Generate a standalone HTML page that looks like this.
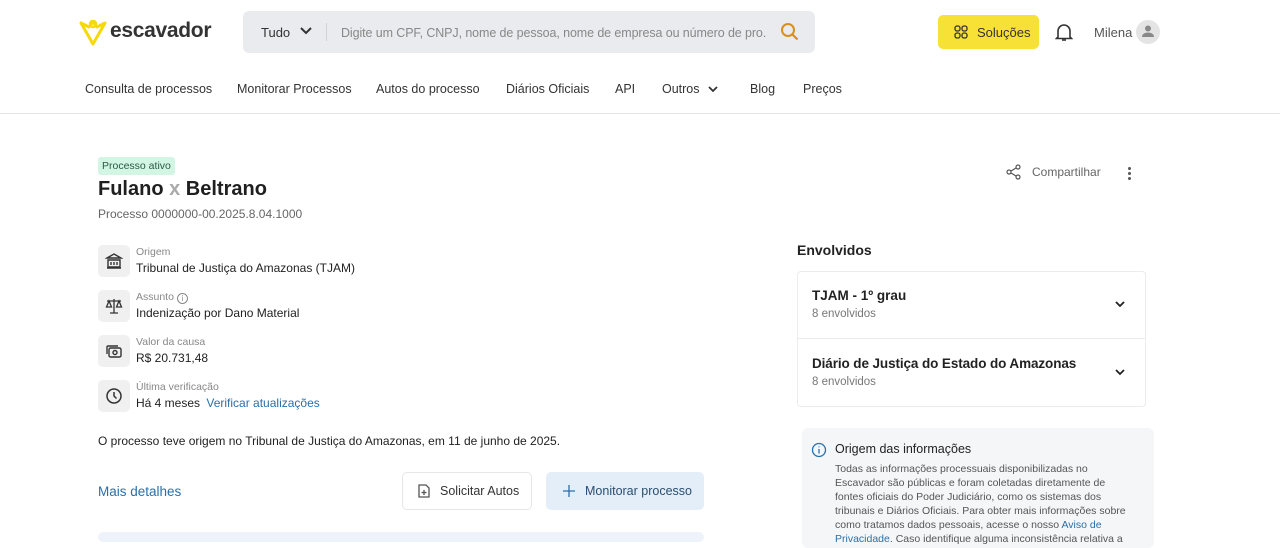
<!DOCTYPE html>
<html><head><meta charset="utf-8"><style>
*{box-sizing:border-box;margin:0;padding:0}
body{width:1280px;height:540px;overflow:hidden;background:#fff;font-family:"Liberation Sans",sans-serif;color:#222;position:relative}
.a{position:absolute;white-space:nowrap}
svg{display:block}
</style></head><body>
<svg class="a" style="left:78px;top:17px" width="30" height="30" viewBox="0 0 30 30"><path d="M3 6 L15 27 L27 6 L19 10 L15 5 L11 10 Z" fill="none" stroke="#f5d90a" stroke-width="3" stroke-linejoin="round"/><circle cx="15" cy="7" r="3" fill="none" stroke="#f5d90a" stroke-width="2.5"/></svg>
<div class="a" style="left:110px;top:19px;font-size:21px;font-weight:bold;color:#333;letter-spacing:-0.3px">escavador</div>
<div class="a" style="left:243px;top:11px;width:572px;height:42px;background:#e9ebee;border-radius:6px"></div>
<div class="a" style="left:261px;top:25px;font-size:13px;color:#333">Tudo</div>
<svg class="a" style="left:299px;top:26px" width="14" height="10" viewBox="0 0 14 10"><path d="M2 2l5 5 5-5" fill="none" stroke="#333" stroke-width="2"/></svg>
<div class="a" style="left:326px;top:23px;width:1px;height:18px;background:#d0d3d8"></div>
<div class="a" style="left:341px;top:26px;font-size:12.5px;color:#888;width:425px;overflow:hidden;letter-spacing:-0.1px">Digite um CPF, CNPJ, nome de pessoa, nome de empresa ou número de pro...</div>
<svg class="a" style="left:780px;top:22px" width="20" height="20" viewBox="0 0 20 20"><circle cx="8" cy="8" r="6" fill="none" stroke="#d9901a" stroke-width="2"/><path d="M12.5 12.5l5 5" stroke="#d9901a" stroke-width="2.2"/></svg>
<div class="a" style="left:938px;top:15px;width:101px;height:34px;background:#f8e137;border-radius:5px"></div>
<svg class="a" style="left:954px;top:25px" width="14" height="14" viewBox="0 0 14 14" fill="none" stroke="#333" stroke-width="1.3"><rect x="1" y="1" width="5" height="5" rx="2"/><rect x="8" y="1" width="5" height="5" rx="2"/><rect x="1" y="8" width="5" height="5" rx="2"/><rect x="8" y="8" width="5" height="5" rx="2"/></svg>
<div class="a" style="left:977px;top:25px;font-size:13px;color:#333">Soluções</div>
<svg class="a" style="left:1055px;top:22px" width="18" height="20" viewBox="0 0 18 20" fill="none" stroke="#333" stroke-width="1.6"><path d="M3 15V9a6 6 0 0112 0v6l1.5 1.5h-15z"/><path d="M7 18h4"/></svg>
<div class="a" style="left:1094px;top:25px;font-size:13px;color:#555">Milena</div>
<div class="a" style="left:1136px;top:20px;width:24px;height:24px;border-radius:50%;background:#e4e4e4"></div>
<svg class="a" style="left:1141px;top:24px" width="14" height="14" viewBox="0 0 14 14" fill="#888"><circle cx="7" cy="4.5" r="3"/><path d="M1 13c0-3 3-4.5 6-4.5s6 1.5 6 4.5z"/></svg>
<div class="a" style="top:82px;left:85px;font-size:12.5px;color:#333">Consulta de processos</div>
<div class="a" style="top:82px;left:237px;font-size:12.5px;color:#333">Monitorar Processos</div>
<div class="a" style="top:82px;left:376px;font-size:12.5px;color:#333">Autos do processo</div>
<div class="a" style="top:82px;left:506px;font-size:12.5px;color:#333">Diários Oficiais</div>
<div class="a" style="top:82px;left:615px;font-size:12.5px;color:#333">API</div>
<div class="a" style="top:82px;left:662px;font-size:12.5px;color:#333">Outros</div>
<svg class="a" style="left:707px;top:85px" width="12" height="9" viewBox="0 0 12 9"><path d="M2 2l4 4 4-4" fill="none" stroke="#333" stroke-width="1.8"/></svg>
<div class="a" style="top:82px;left:750px;font-size:12.5px;color:#333">Blog</div>
<div class="a" style="top:82px;left:803px;font-size:12.5px;color:#333">Preços</div>
<div class="a" style="left:0;top:113px;width:1280px;height:1px;background:#e5e5e5"></div>
<div class="a" style="left:98px;top:157px;height:18px;padding:0 4px;background:#d2f5e4;border-radius:3px;font-size:10.5px;line-height:18px;color:#2a5a45">Processo ativo</div>
<div class="a" style="left:98px;top:178px;font-size:20px;font-weight:bold;color:#1f1f1f">Fulano <span style="color:#aaa">x</span> Beltrano</div>
<div class="a" style="left:98px;top:207px;font-size:12px;color:#666">Processo 0000000-00.2025.8.04.1000</div>
<svg class="a" style="left:1006px;top:164px" width="16" height="16" viewBox="0 0 16 16" fill="none" stroke="#555" stroke-width="1.2"><circle cx="3" cy="8" r="2"/><circle cx="12" cy="3" r="2"/><circle cx="12" cy="13" r="2"/><path d="M5 7l5-3M5 9l5 3"/></svg>
<div class="a" style="left:1032px;top:165px;font-size:12px;color:#666">Compartilhar</div>
<div class="a" style="left:1128px;top:167px;width:3px;height:3px;background:#555;border-radius:50%;box-shadow:0 5px 0 #555,0 10px 0 #555"></div>
<div class="a" style="left:98px;top:245px;width:32px;height:32px;background:#f0f0f0;border-radius:5px"></div>
<svg class="a" style="left:105px;top:252px" width="18" height="18" viewBox="0 0 18 18" fill="none" stroke="#333" stroke-width="1.4"><path d="M2 6l7-4 7 4z"/><path d="M3 8h12v7H3zM6 10v3M9 10v3M12 10v3M2 16h14"/></svg>
<div class="a" style="left:136px;top:246px;font-size:10.5px;color:#888">Origem</div>
<div class="a" style="left:136px;top:261px;font-size:12px;color:#222">Tribunal de Justiça do Amazonas (TJAM)</div>
<div class="a" style="left:98px;top:290px;width:32px;height:32px;background:#f0f0f0;border-radius:5px"></div>
<svg class="a" style="left:105px;top:297px" width="18" height="18" viewBox="0 0 18 18" fill="none" stroke="#333" stroke-width="1.3"><path d="M9 2v14M5 16h8M2 4h14M4 4l-2.5 6h5zM14 4l-2.5 6h5z"/></svg>
<div class="a" style="left:136px;top:291px;font-size:10.5px;color:#888">Assunto <span style="display:inline-block;width:11px;height:11px;border:1px solid #888;border-radius:50%;font-size:8px;line-height:9px;text-align:center;vertical-align:-1px">i</span></div>
<div class="a" style="left:136px;top:306px;font-size:12px;color:#222">Indenização por Dano Material</div>
<div class="a" style="left:98px;top:335px;width:32px;height:32px;background:#f0f0f0;border-radius:5px"></div>
<svg class="a" style="left:105px;top:342px" width="18" height="18" viewBox="0 0 18 18" fill="none" stroke="#333" stroke-width="1.4"><rect x="4" y="6" width="12" height="9" rx="1.5"/><path d="M2 12V5a1 1 0 011-1h10"/><circle cx="10" cy="10.5" r="2"/></svg>
<div class="a" style="left:136px;top:336px;font-size:10.5px;color:#888">Valor da causa</div>
<div class="a" style="left:136px;top:351px;font-size:12px;color:#222">R$ 20.731,48</div>
<div class="a" style="left:98px;top:380px;width:32px;height:32px;background:#f0f0f0;border-radius:5px"></div>
<svg class="a" style="left:105px;top:387px" width="18" height="18" viewBox="0 0 18 18" fill="none" stroke="#333" stroke-width="1.5"><circle cx="9" cy="9" r="7"/><path d="M9 5v4l2.5 2.5"/></svg>
<div class="a" style="left:136px;top:381px;font-size:10.5px;color:#888">Última verificação</div>
<div class="a" style="left:136px;top:396px;font-size:12px;color:#222">Há 4 meses <span style="color:#2a6fa8;margin-left:3px">Verificar atualizações</span></div>
<div class="a" style="left:98px;top:434px;font-size:12px;color:#222">O processo teve origem no Tribunal de Justiça do Amazonas, em 11 de junho de 2025.</div>
<div class="a" style="left:98px;top:484px;font-size:13.5px;color:#2a6fa8">Mais detalhes</div>
<div class="a" style="left:402px;top:472px;width:130px;height:38px;border:1px solid #e6e6e6;border-radius:5px;background:#fff"></div>
<svg class="a" style="left:417px;top:483px" width="14" height="16" viewBox="0 0 14 16" fill="none" stroke="#555" stroke-width="1.3"><path d="M2 2h7l3 3v9H2z"/><path d="M7 7v5M4.5 9.5h5"/></svg>
<div class="a" style="left:440px;top:484px;font-size:12.5px;color:#333">Solicitar Autos</div>
<div class="a" style="left:546px;top:472px;width:158px;height:38px;border-radius:5px;background:#e3eef8"></div>
<svg class="a" style="left:562px;top:484px" width="14" height="14" viewBox="0 0 14 14" stroke="#2a6fa8" stroke-width="1.3"><path d="M7 1v12M1 7h12"/></svg>
<div class="a" style="left:585px;top:484px;font-size:12.5px;color:#2a4f70">Monitorar processo</div>
<div class="a" style="left:98px;top:532px;width:606px;height:10px;background:#eef2fa;border-radius:5px"></div>
<div class="a" style="left:797px;top:242px;font-size:14px;font-weight:bold;color:#222">Envolvidos</div>
<div class="a" style="left:797px;top:271px;width:349px;height:136px;border:1px solid #ececec;border-radius:4px"></div>
<div class="a" style="left:798px;top:338px;width:347px;height:1px;background:#ececec"></div>
<div class="a" style="left:812px;top:288px;font-size:13.5px;font-weight:bold;color:#222">TJAM - 1º grau</div>
<div class="a" style="left:812px;top:308px;font-size:11.5px;color:#777">8 envolvidos</div>
<div class="a" style="left:812px;top:356px;font-size:13.5px;font-weight:bold;color:#222;letter-spacing:-0.1px">Diário de Justiça do Estado do Amazonas</div>
<div class="a" style="left:812px;top:376px;font-size:11.5px;color:#777">8 envolvidos</div>
<svg class="a" style="left:1114px;top:300px" width="12" height="9" viewBox="0 0 12 9"><path d="M2 2l4 4 4-4" fill="none" stroke="#222" stroke-width="1.8"/></svg>
<svg class="a" style="left:1114px;top:368px" width="12" height="9" viewBox="0 0 12 9"><path d="M2 2l4 4 4-4" fill="none" stroke="#222" stroke-width="1.8"/></svg>
<div class="a" style="left:802px;top:428px;width:352px;height:120px;background:#f5f6f8;border-radius:6px"></div>
<svg class="a" style="left:811px;top:442px" width="16" height="16" viewBox="0 0 16 16" fill="none" stroke="#2a6fa8" stroke-width="1.3"><circle cx="8" cy="8" r="6.5"/><path d="M8 7v4.5M8 4.5v.8"/></svg>
<div class="a" style="left:835px;top:442px;font-size:12.5px;color:#222">Origem das informações</div>
<div class="a" style="left:835px;top:462px;width:300px;white-space:normal;font-size:10.5px;line-height:14px;color:#555">Todas as informações processuais disponibilizadas no Escavador são públicas e foram coletadas diretamente de fontes oficiais do Poder Judiciário, como os sistemas dos tribunais e Diários Oficiais. Para obter mais informações sobre como tratamos dados pessoais, acesse o nosso <span style="color:#2a6fa8">Aviso de Privacidade</span>. Caso identifique alguma inconsistência relativa a</div>
</body></html>
